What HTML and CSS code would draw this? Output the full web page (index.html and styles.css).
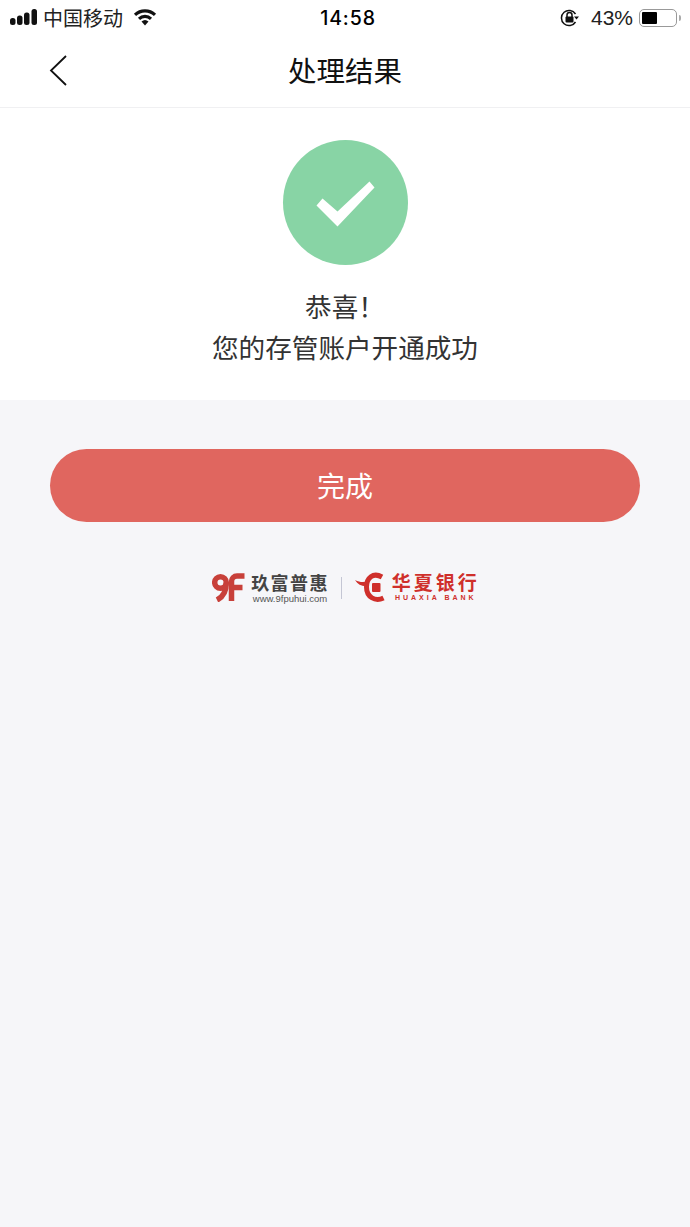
FILE: index.html
```html
<!DOCTYPE html>
<html lang="zh">
<head>
<meta charset="utf-8">
<title>处理结果</title>
<link rel="stylesheet" href="styles.css">
</head>
<body>
<div class="top">
  <div class="status">
    <div class="status-left">
      <svg class="signal" width="28" height="16" viewBox="0 0 28 16"><rect x="0" y="9" width="5.500" height="7" rx="2.500"/><rect x="7" y="6.500" width="5.500" height="9.500" rx="2.500"/><rect x="14" y="3.500" width="5.500" height="12.500" rx="2.500"/><rect x="21.500" y="0" width="5.500" height="16" rx="2.500"/></svg>
      <span class="carrier">中国移动</span>
      <svg class="wifi" width="24" height="17" viewBox="0 0 24 17"><path class="wifi-dot" d="M12 16.500 8.500 12.600a5.200 5.200 0 0 1 7 0Z"/><path class="wifi-arc" d="M2 5.800a14.500 14.500 0 0 1 20 0"/><path class="wifi-arc" d="M6 9.800a8.800 8.800 0 0 1 12 0"/></svg>
    </div>
    <div class="clock">14:58</div>
    <div class="status-right">
      <svg class="lock" width="20" height="18" viewBox="0 0 20 18"><path class="ring" d="M15.500 5A7.600 7.600 0 1 0 15.500 13"/><path d="M14 7.500h5l-2.500 3Z"/><rect x="5.500" y="7.500" width="8" height="6" rx="1"/><path class="shackle" d="M7 8V6a2.500 2.500 0 0 1 5 0v2"/></svg>
      <span class="percent">43%</span>
      <div class="battery"><div class="battery-level"></div></div>
      <div class="battery-cap"></div>
    </div>
  </div>
  <div class="nav">
    <svg class="back" width="20" height="32" viewBox="0 0 20 32"><path d="M17 2 2 16.500 17 31"/></svg>
    <h1 class="title">处理结果</h1>
  </div>
</div>
<main class="result">
  <div class="badge">
    <svg width="60" height="48" viewBox="0 0 60 48"><polygon points="1.500,26.500 7.500,19.500 22.500,32.500 54.500,2.500 59.500,8.500 22.500,47.500"/></svg>
  </div>
  <p class="message">恭喜！</p>
  <p class="message message-second">您的存管账户开通成功</p>
</main>
<section class="actions">
  <button class="done" type="button">完成</button>
  <div class="logos">
    <svg class="logo-9f" width="33" height="30" viewBox="0 0 33 30">
      <circle class="nine" cx="8.500" cy="10.500" r="5.800"/>
      <path class="nine" d="M14.300 10.500C14.300 19 11 25 5 28"/>
      <path class="eff" d="M19.500 29V9.500a5.500 5.500 0 0 1 5.500-5.500h7.500M19.500 15.500h11"/>
    </svg>
    <div class="brand-a">
      <span class="brand-a-name">玖富普惠</span>
      <span class="brand-a-url">www.9fpuhui.com</span>
    </div>
    <div class="divider"></div>
    <svg class="logo-hx" width="30" height="32" viewBox="0 0 30 32">
      <path class="hx-c" d="M27 5C18 0 11.500 6 11.500 15C11.500 25 20 30 28.500 26"/>
      <path class="hx-wing" d="M0 8C5 10.500 9 10.500 14 9L13 14C8 15 3 13 0 8Z"/>
      <rect class="hx-square" x="17" y="11" width="8.500" height="9" rx="1"/>
    </svg>
    <div class="brand-b">
      <span class="brand-b-name">华夏银行</span>
      <span class="brand-b-en">HUAXIA BANK</span>
    </div>
  </div>
</section>
</body>
</html>
```

FILE: styles.css
```css
* { box-sizing: border-box; }
html, body { margin: 0; height: 100%; }
body {
  width: 690px;
  height: 1227px;
  overflow: hidden;
  background: #f6f6f9;
  font-family: "Noto Sans CJK SC", "Liberation Sans", sans-serif;
  display: flex;
  flex-direction: column;
}
.top { background: #fff; border-bottom: 1px solid #f0f0f2; height: 108px; }
.status {
  height: 36px;
  display: grid;
  grid-template-columns: 1fr auto 1fr;
  align-items: center;
  padding: 0 9px 0 10px;
  color: #000;
}
.status-left, .status-right { display: flex; align-items: center; }
.status-right { justify-content: flex-end; }
.signal { fill: #111; margin-right: 5px; margin-top: -2px; }
.carrier { font-size: 20px; line-height: 36px; color: #222; }
.wifi { margin-left: 10px; margin-top: -2px; }
.wifi-dot { fill: #111; }
.wifi-arc { fill: none; stroke: #111; stroke-width: 3.200; }
.clock { font-family: Inter, "Liberation Sans", sans-serif; font-weight: 500; font-size: 19.500px; letter-spacing: 0.900px; margin-left: 5px; }
.lock { fill: #111; margin-right: 11px; }
.lock .ring, .lock .shackle { fill: none; stroke: #111; stroke-width: 1.500; }
.percent { font-family: "Liberation Sans", sans-serif; font-size: 21px; margin-right: 6px; color: #222; }
.battery {
  width: 38px;
  height: 18px;
  border: 1.500px solid #999;
  border-radius: 5px;
  padding: 2px;
}
.battery-level { width: 15px; height: 100%; background: #000; border-radius: 1px; }
.battery-cap { width: 2px; height: 6px; background: #aaa; margin-left: 2px; border-radius: 0 2px 2px 0; }
.nav { height: 71px; display: flex; align-items: center; justify-content: center; position: relative; padding-bottom: 4px; }
.back { position: absolute; left: 49px; top: 18px; fill: none; stroke: #111; stroke-width: 1.800; }
.title { margin: 0; font-size: 28.500px; font-weight: 400; color: #111; line-height: 66px; }
.result {
  background: #fff;
  height: 292px;
  padding-top: 32px;
  display: flex;
  flex-direction: column;
  align-items: center;
}
.badge {
  width: 125px;
  height: 125px;
  border-radius: 50%;
  background: #88d4a5;
  display: flex;
  align-items: center;
  justify-content: center;
  margin-bottom: 21px;
}
.badge svg { fill: #fff; }
.message { margin: 0; font-size: 26.600px; line-height: 40px; color: #333; }
.message-second { margin-top: 1px; }
.actions { display: flex; flex-direction: column; align-items: center; padding-top: 49px; }
.done {
  width: 590px;
  height: 73px;
  border: 0;
  border-radius: 37px;
  background: #e0665f;
  color: #fff;
  font: inherit;
  font-size: 28px;
  padding: 0 0 2px;
}
.logos { display: flex; align-items: flex-start; margin: 50px 0 0 2px; }
.logo-9f { fill: none; stroke: #c8403a; stroke-width: 5.500; margin-right: 6px; }
.brand-a, .brand-b { display: flex; flex-direction: column; align-items: center; }
.brand-a-name { font-size: 18px; line-height: 20px; letter-spacing: 1.400px; font-weight: 700; color: #444; margin-bottom: 2px; }
.brand-a-url { font-family: "Liberation Sans", sans-serif; font-size: 9.500px; line-height: 10px; color: #555; }
.divider { width: 1px; height: 22px; background: #c4c6d4; margin: 5px 13px 0 12px; }
.logo-hx { margin-right: 7px; }
.hx-c { fill: none; stroke: #cf2f2b; stroke-width: 5; }
.hx-wing, .hx-square { fill: #cf2f2b; }
.brand-b-name { font-size: 19px; line-height: 20px; letter-spacing: 3px; font-weight: 700; color: #cf2f2b; margin-bottom: 2px; }
.brand-b-en { font-family: "Liberation Sans", sans-serif; font-size: 7px; line-height: 8px; letter-spacing: 3px; font-weight: 700; color: #cf2f2b; }
```
